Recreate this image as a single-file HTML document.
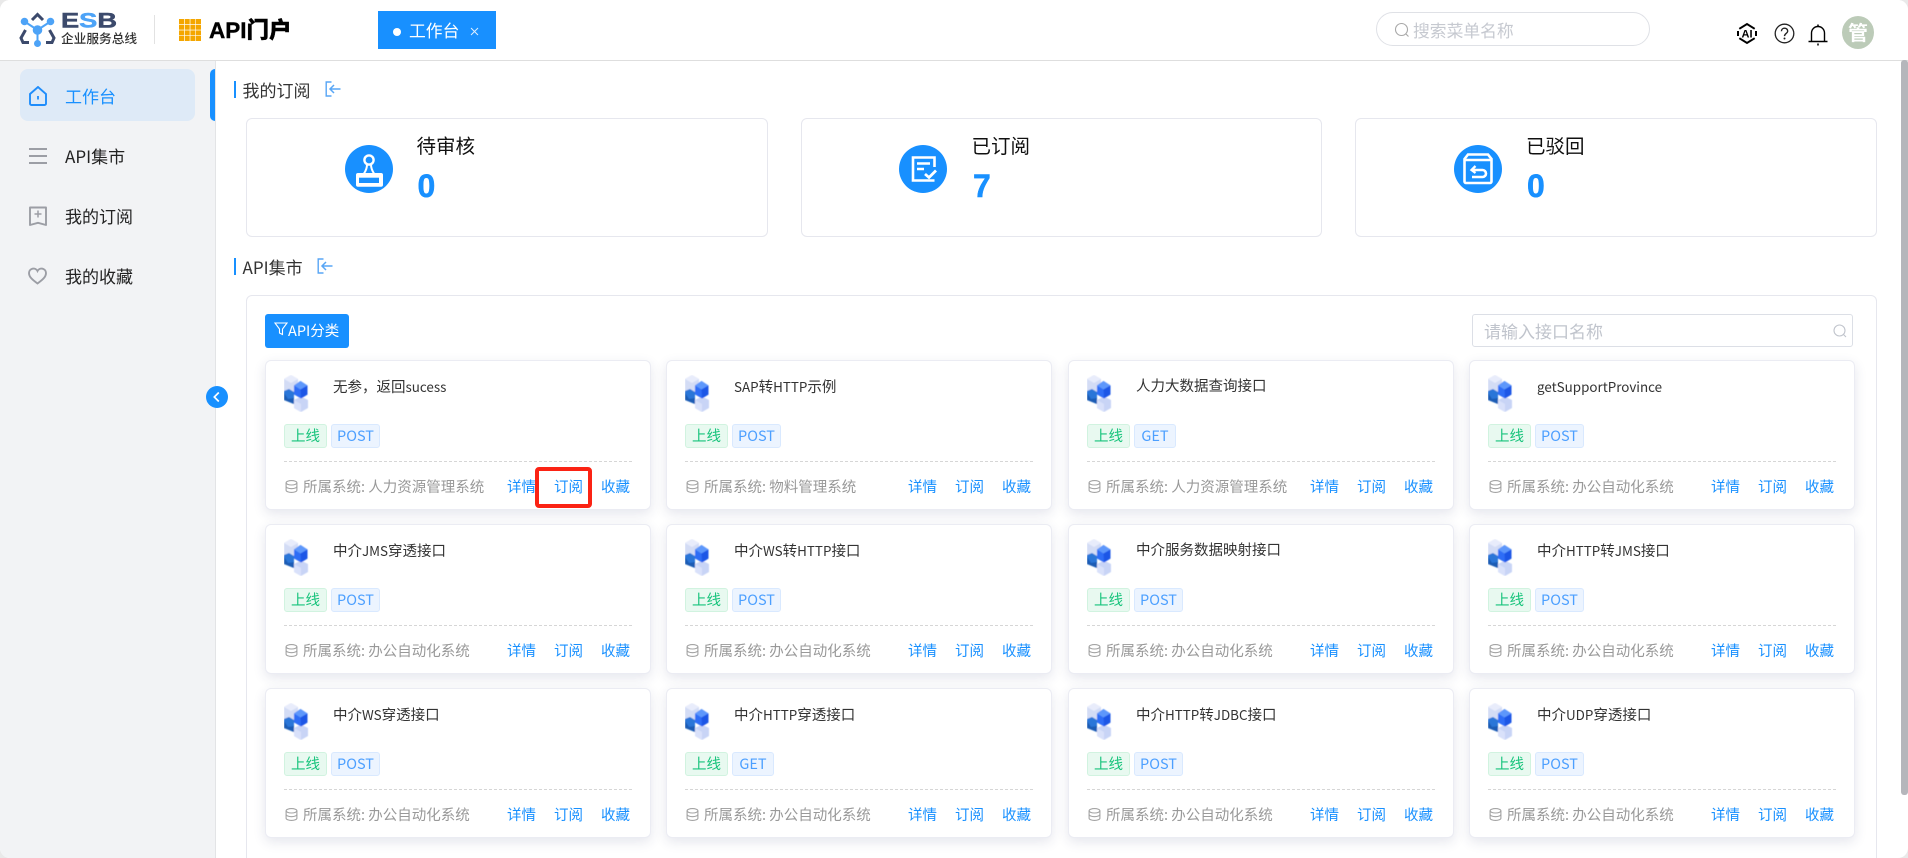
<!DOCTYPE html>
<html lang="zh">
<head>
<meta charset="utf-8">
<title>API门户</title>
<style>
*{box-sizing:border-box;margin:0;padding:0}
html,body{width:1908px;height:858px;overflow:hidden;background:#e9e9e9}
body{position:relative;font-family:"Noto Sans CJK SC","Liberation Sans",sans-serif;color:#333}
.abs,.t{position:absolute}
.t{white-space:nowrap;line-height:1}
#app{position:absolute;left:0;top:0;width:1908px;height:858px;background:#fff;border-radius:10px;overflow:hidden}
#hd{position:absolute;left:0;top:0;width:1908px;height:61px;background:#fff;border-bottom:1px solid #dedede}
#side{position:absolute;left:0;top:61px;width:216px;height:797px;background:#f2f3f5;border-right:1px solid #e3e4e6}
.active{position:absolute;left:20px;top:8px;width:175px;height:52px;border-radius:8px;background:#deeaf7}
.bar{position:absolute;left:210px;top:69px;width:5px;height:52px;background:#1890ff;border-radius:5px 0 0 5px}
.mi{font-size:17px;left:65px;color:#222}
.st{position:absolute;top:118px;width:522px;height:119px;border:1px solid #e6e7ee;border-radius:6px;background:#fff}
.sec{position:absolute;left:234px;width:2px;height:17px;background:#1890ff}
.sect{font-size:17px;left:242.5px;color:#333}
.panel{position:absolute;left:246px;top:295px;width:1631px;height:600px;border:1px solid #e6e7ee;border-radius:6px;background:#fff}
.card{position:absolute;width:386px;height:150px;background:#fff;border:1px solid #ebecf3;border-radius:6px;box-shadow:0 4px 12px rgba(40,50,110,.12)}
.card .cube{position:absolute;left:18px;top:14px}
.card .name{position:absolute;left:67px;top:15px;font-size:14.5px;line-height:20px;color:#333;white-space:nowrap}
.name b{font-weight:400;font-size:13.4px}
.tag{position:absolute;top:63px;height:24px;line-height:22px;font-size:14.5px;text-align:center;border-radius:3px;border:1px solid}
.tg{left:18px;width:43px;background:#e8f9f0;border-color:#d1f3e0;color:#18c47c}
.tb{left:65px;width:49px;background:#ecf4ff;border-color:#d9e9ff;color:#4c9fff}
.tb.get{width:42px}
.dash{position:absolute;left:18px;top:100px;width:348px;border-top:1px dashed #d6d6d6}
.sys{position:absolute;left:37px;top:116px;font-size:14.5px;line-height:20px;color:#999;white-space:nowrap}
.db{position:absolute;left:19px;top:119px}
.lk{position:absolute;top:116px;font-size:14.5px;line-height:20px;color:#1890ff;white-space:nowrap}
.l1{left:241px}.l2{left:288px}.l3{left:335px}
</style>
</head>
<body>
<svg width="0" height="0" style="position:absolute">
  <defs>
    <filter id="bl" x="-10%" y="-10%" width="120%" height="120%"><feGaussianBlur stdDeviation=".4"/></filter>
    <symbol id="cube" viewBox="0 0 25 37">
      <g filter="url(#bl)">
        <path d="M0 4 7 0l7 4v12l-7 3.500-7-3.500z" fill="#d3dcf5"/>
        <path d="M0 4 7 0l7 4-7 4z" fill="#e8ecfb"/>
        <path d="M0 16l5-2 5 3v12l-10-4z" fill="#2a76d8"/>
        <path d="M4 24l6-1v6l-10-4v-7z" fill="#1a5cb4"/>
        <path d="M10 25l7-3.500 7 3.500v8l-7 4-7-4z" fill="#c8d4f6"/>
        <path d="M10 25l7 4v8l-7-4z" fill="#d9e1fa"/>
        <path d="M10 10.500 16.500 6l7 4.500v9L17 23.500 10 19.500z" fill="#2d6df6"/>
        <path d="M10 10.500 16.500 6l7 4.500-7 4z" fill="#5d97fb"/>
        <path d="M16.500 14.500l7-4v9L17 23.500z" fill="#1d56e6"/>
      </g>
    </symbol>
    <symbol id="dbi" viewBox="0 0 13 13">
      <g fill="none" stroke="#a3a3a3" stroke-width="1.100">
        <ellipse cx="6.500" cy="2.800" rx="5.400" ry="2.200"/>
        <path d="M1.100 2.800v7.400c0 1.200 2.400 2.200 5.400 2.200s5.400-1 5.400-2.200V2.800"/>
        <path d="M1.100 6.500c0 1.200 2.400 2.200 5.400 2.200s5.400-1 5.400-2.200"/>
      </g>
    </symbol>
    <symbol id="exit" viewBox="0 0 16 16">
      <path d="M6.500 1H1.200v14h5.300" fill="none" stroke="#58a6f5" stroke-width="1.400"/>
      <path d="M15.500 8H5.200M9 4 5 8l4 4" fill="none" stroke="#58a6f5" stroke-width="1.500"/>
    </symbol>
  </defs>
</svg>
<div id="app">
<div id="hd">
  <svg class="abs" style="left:19px;top:10px" width="37" height="38" viewBox="0 0 37 38">
    <g fill="none" stroke="#3c4a6c" stroke-width="3">
      <path d="M13 10 18.500 4.500 24 10"/>
      <path d="M6.500 20 2 28l2 4.500h6"/>
      <path d="M30.500 20 35 28l-2 4.500h-6"/>
    </g>
    <g stroke="#4da3f7" stroke-width="2" fill="#4da3f7">
      <path d="M5.500 11.500 18.500 20l13-8.500M18.500 20v13" fill="none"/>
      <circle cx="5.500" cy="11.500" r="2.800"/><circle cx="31.500" cy="11.500" r="2.800"/>
      <circle cx="18.500" cy="20" r="3.800"/><circle cx="18.500" cy="33.500" r="2.500"/>
    </g>
  </svg>
  <svg class="abs" style="left:61px;top:10px" width="58" height="19" viewBox="0 0 58 19">
    <text x="0" y="17.300" font-family="Liberation Sans" font-weight="700" font-size="21" textLength="56" lengthAdjust="spacingAndGlyphs" stroke-width=".5" stroke="#3c4a6c" fill="#3c4a6c">E<tspan fill="#4da3f7" stroke="#4da3f7">S</tspan>B</text>
  </svg>
  <div class="t" style="left:61px;top:32px;font-size:12.700px;color:#333;font-weight:500">企业服务总线</div>
  <div class="abs" style="left:154px;top:15px;width:1px;height:29px;background:#e2e2e2"></div>
  <svg class="abs" style="left:179px;top:19px" width="22" height="22" viewBox="0 0 22 22">
    <g fill="#f4a600">
      <rect x="0" y="0" width="5" height="5"/><rect x="5.700" y="0" width="5" height="5"/><rect x="11.400" y="0" width="5" height="5"/><rect x="17" y="0" width="5" height="5"/>
      <rect x="0" y="5.700" width="5" height="5"/><rect x="5.700" y="5.700" width="5" height="5"/><rect x="11.400" y="5.700" width="5" height="5"/><rect x="17" y="5.700" width="5" height="5"/>
      <rect x="0" y="11.400" width="5" height="5"/><rect x="5.700" y="11.400" width="5" height="5"/><rect x="11.400" y="11.400" width="5" height="5"/><rect x="17" y="11.400" width="5" height="5"/>
      <rect x="0" y="17" width="5" height="5"/><rect x="5.700" y="17" width="5" height="5"/><rect x="11.400" y="17" width="5" height="5"/><rect x="17" y="17" width="5" height="5"/>
    </g>
  </svg>
  <div class="t" style="left:209px;top:20px;font-family:'Liberation Sans','Noto Sans CJK SC',sans-serif;font-size:22.500px;font-weight:900;color:#000;-webkit-text-stroke:.4px #000">API门户</div>
  <div class="abs" style="left:378px;top:11px;width:118px;height:38px;background:#1890ff"></div>
  <div class="abs" style="left:393px;top:28px;width:8px;height:8px;border-radius:50%;background:#fff"></div>
  <div class="t" style="left:409px;top:22px;font-size:16.800px;color:#fff">工作台</div>
  <svg class="abs" style="left:470px;top:27px" width="9" height="9" viewBox="0 0 9 9"><path d="M1 1l7 7M8 1 1 8" stroke="#fff" stroke-opacity=".85" stroke-width="1"/></svg>
  <div class="abs" style="left:1376px;top:12px;width:274px;height:34px;border:1px solid #dfe1e6;border-radius:17px"></div>
  <svg class="abs" style="left:1394px;top:22px" width="16" height="16" viewBox="0 0 16 16"><circle cx="7.500" cy="7.500" r="6" fill="none" stroke="#a8a8a8" stroke-width="1.100"/><path d="M12 12l2.500 2.500" stroke="#a8a8a8" stroke-width="1.100"/></svg>
  <div class="t" style="left:1413px;top:22px;font-size:16.800px;color:#c6c9d0">搜索菜单名称</div>
  <svg class="abs" style="left:1736px;top:22px" width="22" height="23" viewBox="0 0 22 23">
    <path d="M3.300 6.800 11 2l7.700 4.800M18.700 16.200 11 21l-7.700-4.800" fill="none" stroke="#000" stroke-width="2"/>
    <path d="M2 9v5M20 9v5" stroke="#000" stroke-width="2"/>
    <text x="11" y="15.500" text-anchor="middle" font-family="Liberation Sans" font-size="11" font-weight="700" fill="#000">AI</text>
  </svg>
  <svg class="abs" style="left:1774px;top:23px" width="21" height="21" viewBox="0 0 21 21"><circle cx="10.500" cy="10.500" r="9.300" fill="none" stroke="#222" stroke-width="1.300"/><path d="M7.400 8.300c0-4.100 6.300-4.100 6.300-.2 0 2.300-3.200 2.400-3.200 5" fill="none" stroke="#222" stroke-width="1.400"/><circle cx="10.500" cy="15.500" r="1" fill="#222"/></svg>
  <svg class="abs" style="left:1808px;top:24px" width="20" height="22" viewBox="0 0 20 22"><path d="M3.500 17V9c0-3.800 3-6.500 6.500-6.500s6.500 2.700 6.500 6.500v8" fill="none" stroke="#000" stroke-width="1.400"/><path d="M.5 17.500h19" stroke="#000" stroke-width="1.600"/><path d="M10 .5V2.500M10 19.500v2" stroke="#000" stroke-width="1.500"/></svg>
  <div class="abs" style="left:1842px;top:16px;width:32px;height:33px;border-radius:50%;background:#bccbb8;color:#fff;font-size:20px;line-height:32px;text-align:center;font-weight:700">管</div>
</div>

<div id="side">
  <div class="active"></div>
</div>
<div class="bar"></div>
<svg class="abs" style="left:29px;top:86px" width="18" height="20" viewBox="0 0 18 20"><path d="M1 8 9 1l8 7v9.500a1.500 1.500 0 0 1-1.500 1.500h-13A1.500 1.500 0 0 1 1 17.500z" fill="none" stroke="#1f8dfb" stroke-width="1.900"/><path d="M9 10v3.500" stroke="#1f8dfb" stroke-width="1.800"/></svg>
<div class="t mi" style="top:87px;color:#1890ff">工作台</div>
<svg class="abs" style="left:29px;top:147px" width="18" height="18" viewBox="0 0 18 18"><path d="M0 2h18M0 9h18M0 16h18" stroke="#9c9ea5" stroke-width="2"/></svg>
<div class="t mi" style="top:147px">API集市</div>
<svg class="abs" style="left:29px;top:206px" width="18" height="20" viewBox="0 0 18 20"><path d="M1 1.500h16V19l-8-2.200L1 19z" fill="none" stroke="#9c9ea5" stroke-width="1.900" stroke-linejoin="round"/><path d="M5.500 8h7M9 4.500v7" stroke="#9c9ea5" stroke-width="1.500"/></svg>
<div class="t mi" style="top:207px">我的订阅</div>
<svg class="abs" style="left:28px;top:267px" width="19" height="18" viewBox="0 0 19 18"><path d="M9.500 16.500C4 12.500 1 9.800 1 6a4.500 4.500 0 0 1 8.500-2A4.500 4.500 0 0 1 18 6c0 3.800-3 6.500-8.500 10.500z" fill="none" stroke="#9c9ea5" stroke-width="1.900"/></svg>
<div class="t mi" style="top:267px">我的收藏</div>

<div class="sec" style="top:81px"></div>
<div class="t sect" style="top:81px">我的订阅</div>
<svg class="abs" style="left:325px;top:81px" width="16" height="16"><use href="#exit"/></svg>
<div class="sec" style="top:258px"></div>
<div class="t sect" style="top:258px">API集市</div>
<svg class="abs" style="left:317px;top:258px" width="16" height="16"><use href="#exit"/></svg>

<div class="st" style="left:246px"></div>
<div class="st" style="left:801px;width:521px"></div>
<div class="st" style="left:1355px"></div>

<svg class="abs" style="left:345px;top:145px" width="48" height="48" viewBox="0 0 48 48"><circle cx="24" cy="24" r="24" fill="#1890ff"/><circle cx="24" cy="15" r="4.600" fill="none" stroke="#fff" stroke-width="2.400"/><path d="M22 19.500c0 3-1 6-3 9M26 19.500c0 3 1 6 3 9" fill="none" stroke="#fff" stroke-width="2"/><rect x="11" y="28" width="27" height="13.700" rx="2" fill="#fff"/><rect x="14" y="32.700" width="20" height="5.300" fill="#1890ff"/></svg>
<div class="t" style="left:416.500px;top:135px;font-size:19.500px;color:#111">待审核</div>
<div class="t" style="left:417.500px;top:170px;font-family:'Liberation Sans';font-size:32px;font-weight:700;color:#1890ff;-webkit-text-stroke:.5px #1890ff">0</div>

<svg class="abs" style="left:899px;top:145px" width="48" height="48" viewBox="0 0 48 48"><circle cx="24" cy="24" r="24" fill="#1890ff"/><path d="M35.500 22V12.500h-21.500v23h21.500" fill="none" stroke="#fff" stroke-width="2.600"/><path d="M18 18.500h13M18 24h7" stroke="#fff" stroke-width="2.600"/><path d="M26 29l4 3.500 7-7" fill="none" stroke="#fff" stroke-width="2.800"/></svg>
<div class="t" style="left:971.500px;top:135px;font-size:19.500px;color:#111">已订阅</div>
<div class="t" style="left:973px;top:170px;font-family:'Liberation Sans';font-size:32px;font-weight:700;color:#1890ff;-webkit-text-stroke:.5px #1890ff">7</div>

<svg class="abs" style="left:1454px;top:145px" width="48" height="48" viewBox="0 0 48 48"><circle cx="24" cy="24" r="24" fill="#1890ff"/><path d="M10.500 14 14 9.500h20L37.500 14v22.500a1.500 1.500 0 0 1-1.500 1.500H12a1.500 1.500 0 0 1-1.500-1.500z" fill="none" stroke="#fff" stroke-width="2.600"/><path d="M10.500 15h27" stroke="#fff" stroke-width="2.600"/><path d="M18 25h10.500a3.500 3.500 0 0 1 0 7H18" fill="none" stroke="#fff" stroke-width="2.600"/><path d="M21.500 21 17.500 25l4 3" fill="none" stroke="#fff" stroke-width="2.300"/></svg>
<div class="t" style="left:1526px;top:135px;font-size:19.500px;color:#111">已驳回</div>
<div class="t" style="left:1527px;top:170px;font-family:'Liberation Sans';font-size:32px;font-weight:700;color:#1890ff;-webkit-text-stroke:.5px #1890ff">0</div>

<div class="panel"></div>
<div class="abs" style="left:265px;top:314px;width:84px;height:34px;background:#1890ff;border-radius:3px"></div>
<svg class="abs" style="left:274px;top:322px" width="14" height="14" viewBox="0 0 14 14"><path d="M1 1h12L8.500 7v5.500L5.500 11V7z" fill="none" stroke="#fff" stroke-width="1.100"/></svg>
<div class="t" style="left:288px;top:324px;font-size:14.500px;color:#fff">API分类</div>
<div class="abs" style="left:1472px;top:314px;width:381px;height:33px;border:1px solid #dcdfe6;border-radius:3px;background:#fff"></div>
<div class="t" style="left:1484px;top:322px;font-size:17px;color:#c0c4cc">请输入接口名称</div>
<svg class="abs" style="left:1833px;top:324px" width="14" height="14" viewBox="0 0 14 14"><circle cx="6.500" cy="6.500" r="5.500" fill="none" stroke="#c0c4cc" stroke-width="1.100"/><path d="M10.500 10.500l2.500 2.500" stroke="#c0c4cc" stroke-width="1.100"/></svg>

<div class="card" style="left:265px;top:360px"><svg class="cube" width="25" height="37"><use href="#cube"/></svg><div class="name">无参，返回<b>sucess</b></div><div class="tag tg">上线</div><div class="tag tb">POST</div><div class="dash"></div><svg class="db" width="13" height="13"><use href="#dbi"/></svg><div class="sys">所属系统: 人力资源管理系统</div><div class="lk l1">详情</div><div class="lk l2">订阅</div><div class="lk l3">收藏</div></div>
<div class="card" style="left:666px;top:360px"><svg class="cube" width="25" height="37"><use href="#cube"/></svg><div class="name"><b>SAP</b>转<b>HTTP</b>示例</div><div class="tag tg">上线</div><div class="tag tb">POST</div><div class="dash"></div><svg class="db" width="13" height="13"><use href="#dbi"/></svg><div class="sys">所属系统: 物料管理系统</div><div class="lk l1">详情</div><div class="lk l2">订阅</div><div class="lk l3">收藏</div></div>
<div class="card" style="left:1068px;top:360px"><svg class="cube" width="25" height="37"><use href="#cube"/></svg><div class="name">人力大数据查询接口</div><div class="tag tg">上线</div><div class="tag tb get">GET</div><div class="dash"></div><svg class="db" width="13" height="13"><use href="#dbi"/></svg><div class="sys">所属系统: 人力资源管理系统</div><div class="lk l1">详情</div><div class="lk l2">订阅</div><div class="lk l3">收藏</div></div>
<div class="card" style="left:1469px;top:360px"><svg class="cube" width="25" height="37"><use href="#cube"/></svg><div class="name"><b>getSupportProvince</b></div><div class="tag tg">上线</div><div class="tag tb">POST</div><div class="dash"></div><svg class="db" width="13" height="13"><use href="#dbi"/></svg><div class="sys">所属系统: 办公自动化系统</div><div class="lk l1">详情</div><div class="lk l2">订阅</div><div class="lk l3">收藏</div></div>

<div class="card" style="left:265px;top:524px"><svg class="cube" width="25" height="37"><use href="#cube"/></svg><div class="name">中介<b>JMS</b>穿透接口</div><div class="tag tg">上线</div><div class="tag tb">POST</div><div class="dash"></div><svg class="db" width="13" height="13"><use href="#dbi"/></svg><div class="sys">所属系统: 办公自动化系统</div><div class="lk l1">详情</div><div class="lk l2">订阅</div><div class="lk l3">收藏</div></div>
<div class="card" style="left:666px;top:524px"><svg class="cube" width="25" height="37"><use href="#cube"/></svg><div class="name">中介<b>WS</b>转<b>HTTP</b>接口</div><div class="tag tg">上线</div><div class="tag tb">POST</div><div class="dash"></div><svg class="db" width="13" height="13"><use href="#dbi"/></svg><div class="sys">所属系统: 办公自动化系统</div><div class="lk l1">详情</div><div class="lk l2">订阅</div><div class="lk l3">收藏</div></div>
<div class="card" style="left:1068px;top:524px"><svg class="cube" width="25" height="37"><use href="#cube"/></svg><div class="name">中介服务数据映射接口</div><div class="tag tg">上线</div><div class="tag tb">POST</div><div class="dash"></div><svg class="db" width="13" height="13"><use href="#dbi"/></svg><div class="sys">所属系统: 办公自动化系统</div><div class="lk l1">详情</div><div class="lk l2">订阅</div><div class="lk l3">收藏</div></div>
<div class="card" style="left:1469px;top:524px"><svg class="cube" width="25" height="37"><use href="#cube"/></svg><div class="name">中介<b>HTTP</b>转<b>JMS</b>接口</div><div class="tag tg">上线</div><div class="tag tb">POST</div><div class="dash"></div><svg class="db" width="13" height="13"><use href="#dbi"/></svg><div class="sys">所属系统: 办公自动化系统</div><div class="lk l1">详情</div><div class="lk l2">订阅</div><div class="lk l3">收藏</div></div>

<div class="card" style="left:265px;top:688px"><svg class="cube" width="25" height="37"><use href="#cube"/></svg><div class="name">中介<b>WS</b>穿透接口</div><div class="tag tg">上线</div><div class="tag tb">POST</div><div class="dash"></div><svg class="db" width="13" height="13"><use href="#dbi"/></svg><div class="sys">所属系统: 办公自动化系统</div><div class="lk l1">详情</div><div class="lk l2">订阅</div><div class="lk l3">收藏</div></div>
<div class="card" style="left:666px;top:688px"><svg class="cube" width="25" height="37"><use href="#cube"/></svg><div class="name">中介<b>HTTP</b>穿透接口</div><div class="tag tg">上线</div><div class="tag tb get">GET</div><div class="dash"></div><svg class="db" width="13" height="13"><use href="#dbi"/></svg><div class="sys">所属系统: 办公自动化系统</div><div class="lk l1">详情</div><div class="lk l2">订阅</div><div class="lk l3">收藏</div></div>
<div class="card" style="left:1068px;top:688px"><svg class="cube" width="25" height="37"><use href="#cube"/></svg><div class="name">中介<b>HTTP</b>转<b>JDBC</b>接口</div><div class="tag tg">上线</div><div class="tag tb">POST</div><div class="dash"></div><svg class="db" width="13" height="13"><use href="#dbi"/></svg><div class="sys">所属系统: 办公自动化系统</div><div class="lk l1">详情</div><div class="lk l2">订阅</div><div class="lk l3">收藏</div></div>
<div class="card" style="left:1469px;top:688px"><svg class="cube" width="25" height="37"><use href="#cube"/></svg><div class="name">中介<b>UDP</b>穿透接口</div><div class="tag tg">上线</div><div class="tag tb">POST</div><div class="dash"></div><svg class="db" width="13" height="13"><use href="#dbi"/></svg><div class="sys">所属系统: 办公自动化系统</div><div class="lk l1">详情</div><div class="lk l2">订阅</div><div class="lk l3">收藏</div></div>

<div class="abs" style="left:535px;top:467px;width:57px;height:41px;border:4px solid #fb2314;border-radius:4px"></div>
<svg class="abs" style="left:206px;top:386px" width="22" height="22" viewBox="0 0 22 22"><circle cx="11" cy="11" r="11" fill="#1890ff"/><path d="M12.800 6.500 8.300 11l4.500 4.500" fill="none" stroke="#fff" stroke-width="1.700"/></svg>
<div class="abs" style="left:1901px;top:60px;width:7px;height:735px;background:#b5b6bb;border-radius:3px"></div>
</div>
</body>
</html>
